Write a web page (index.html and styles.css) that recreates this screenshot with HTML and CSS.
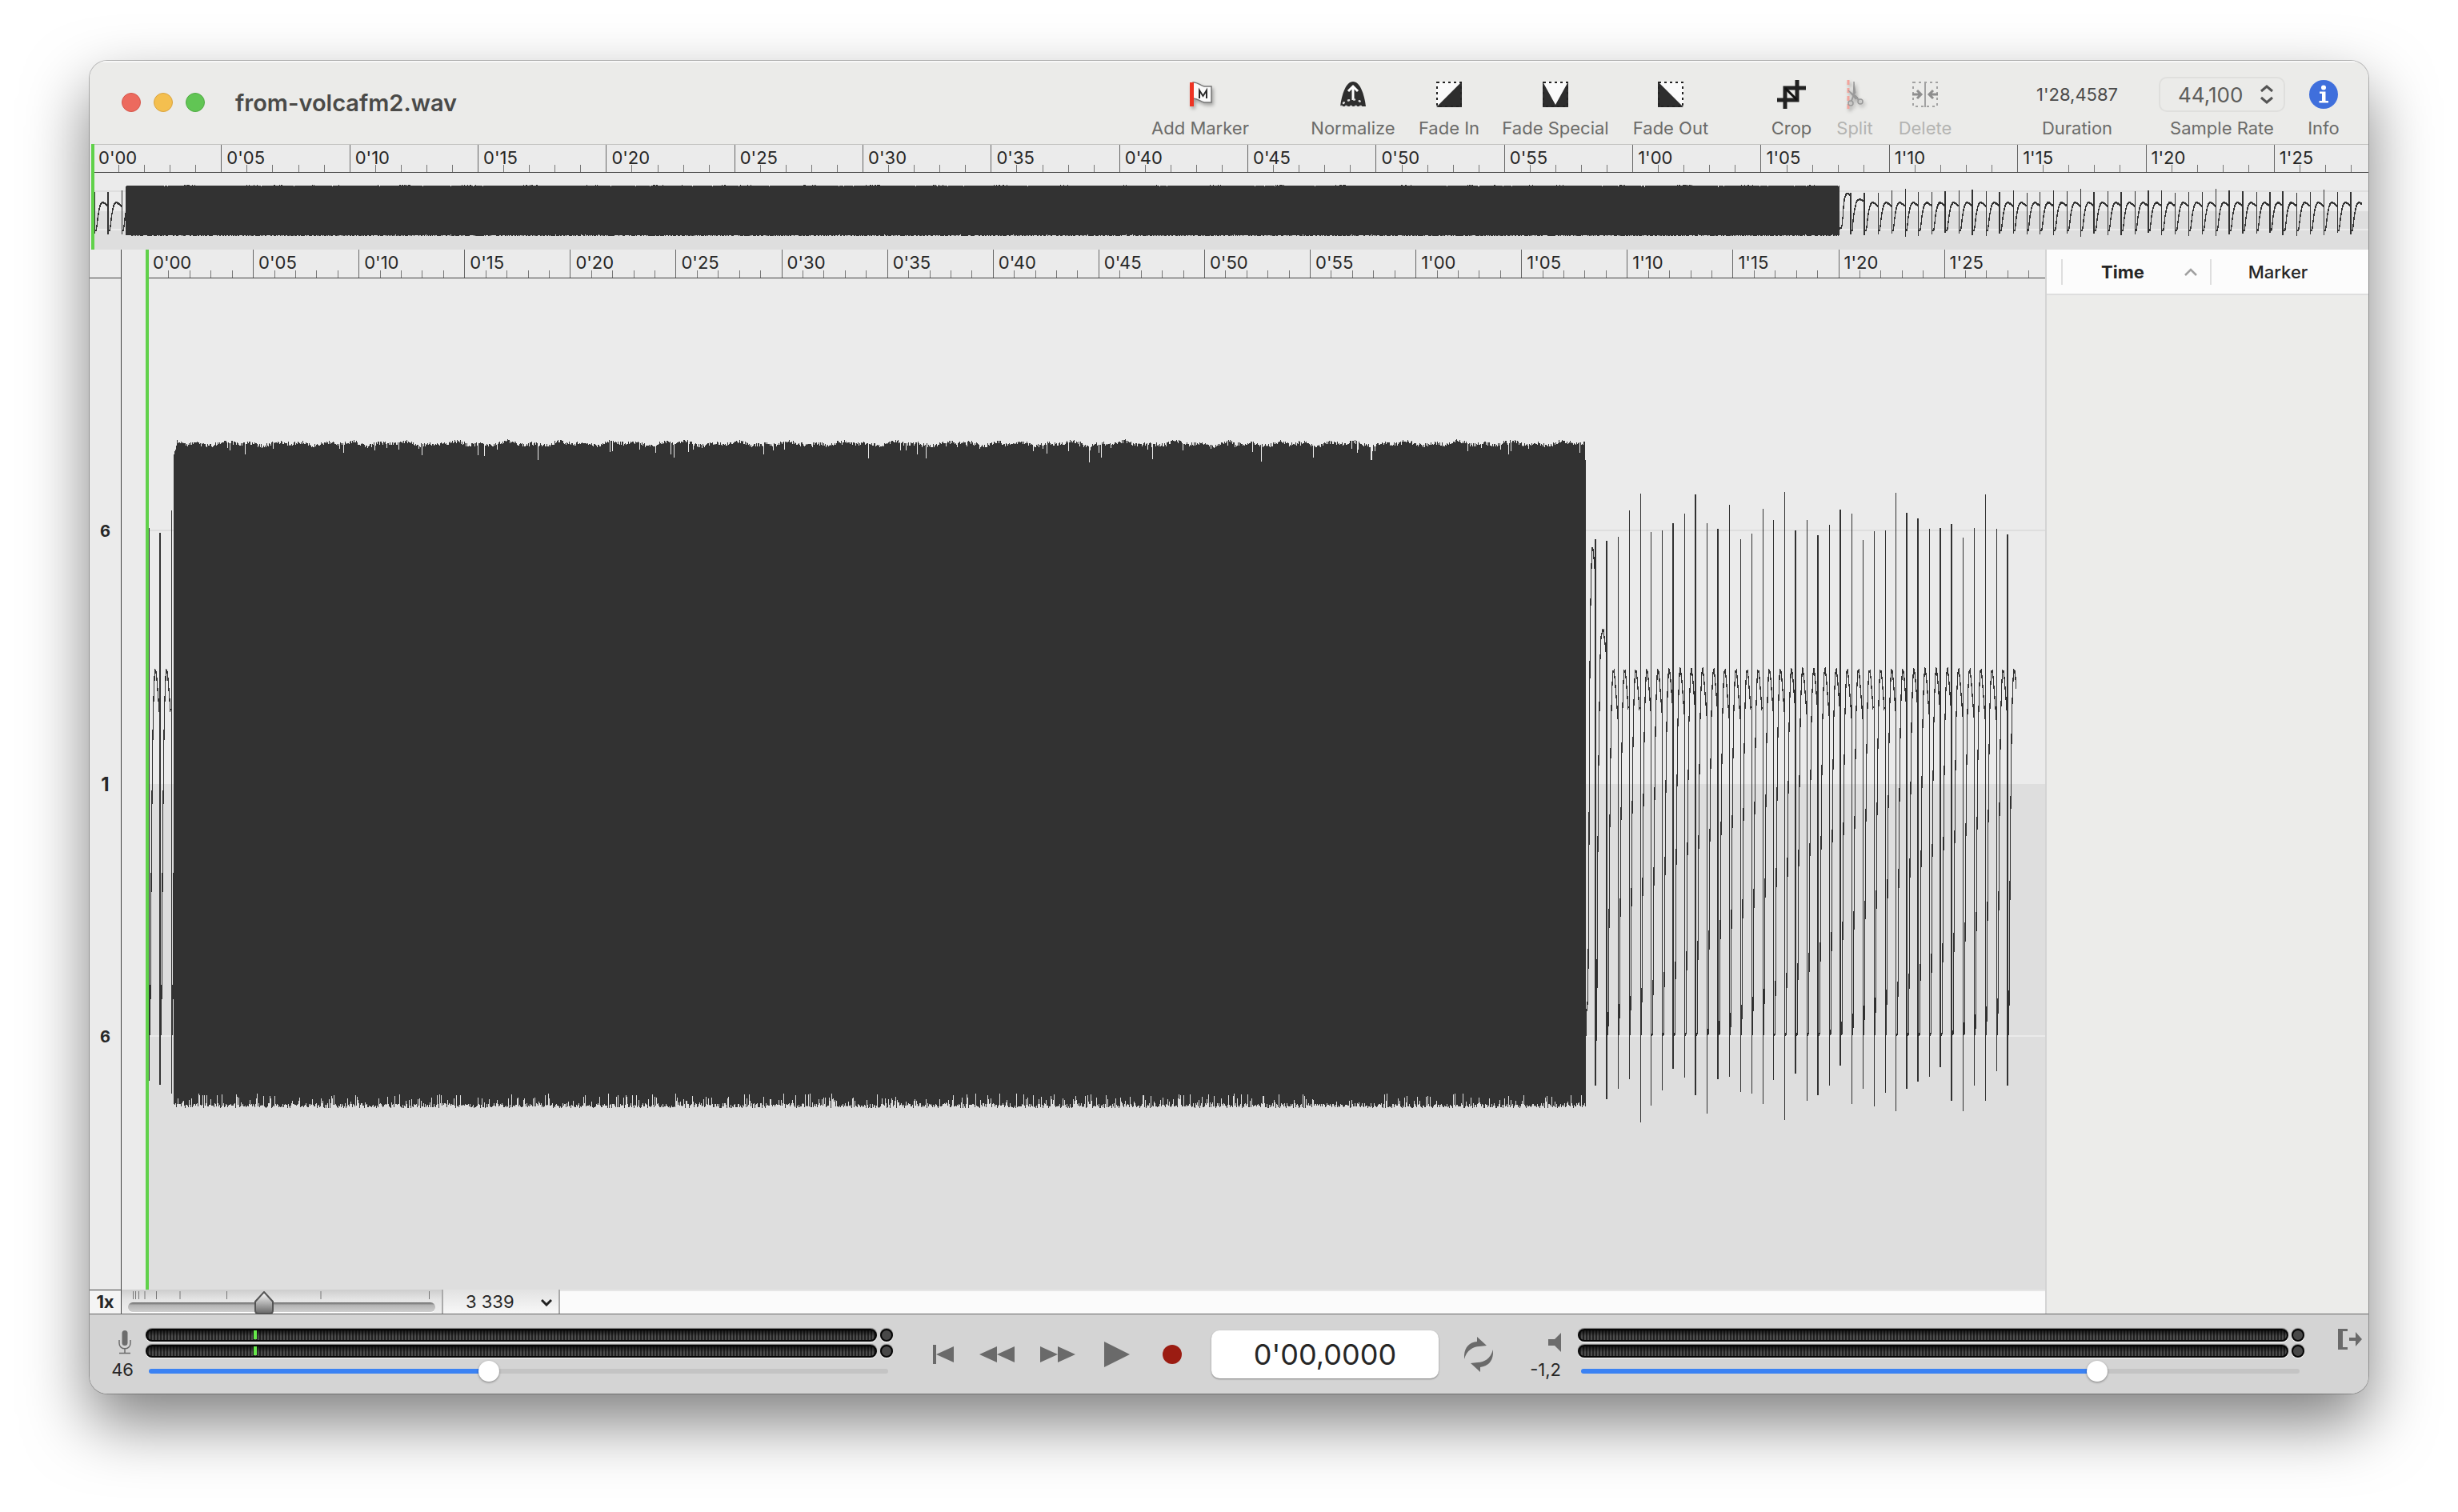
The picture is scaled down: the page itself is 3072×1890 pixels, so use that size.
FILE: index.html
```html
<!DOCTYPE html>
<html lang="en">
  <head>
    <meta charset="UTF-8" />
    <meta name="viewport" content="width=device-width, initial-scale=1.0" />
    <title>from-volcafm2.wav</title>
    <link rel="stylesheet" href="styles.css">
  </head>
  <body>
    <div id="window">
      <header class="titlebar">
        <div class="lights">
          <button class="light red" aria-label="Close"></button>
          <button class="light yellow" aria-label="Minimize"></button>
          <button class="light green" aria-label="Zoom"></button>
        </div>
        <h1>from-volcafm2.wav</h1>
        <div class="toolbar">
          <button class="tool tool-marker">
            <span class="tool-icon">
              <svg class="flag" width="34" height="34" viewBox="0 0 34 34">
                <path d="M8 2c5-1 9 4 14 5h9v20h-9c-5-1-8-5-14-5z" fill="#fafafa" stroke="#777" stroke-width="1.5" />
                <path d="M16 22V12l4.500 7 4.500-7v10" fill="none" stroke="#2a2a2a" stroke-width="2" />
                <rect x="4" y="2" width="5" height="30" fill="#ee3424" />
              </svg>
            </span>
            <span class="tool-label">Add Marker</span>
          </button>
          <div class="tool-group">
            <button class="tool tool-normalize">
              <span class="tool-icon">
                <svg width="34" height="34" viewBox="0 0 34 34">
                  <path d="M1 32C3 17 8 1 17 1s14 16 16 31z" fill="#2e2e2e" />
                  <path d="M17 24V8M11 13l6-6 6 6" fill="none" stroke="#fff" stroke-width="3" />
                  <path d="M5 28c7-6 17-6 24 0" fill="none" stroke="#ddd" stroke-width="2.500" stroke-linecap="round" stroke-dasharray="1 6" />
                  <path d="M2 32h30" stroke="#ddd" stroke-width="2.500" stroke-linecap="round" stroke-dasharray="1 5" />
                </svg>
              </span>
              <span class="tool-label">Normalize</span>
            </button>
            <button class="tool tool-in">
              <span class="tool-icon">
                <svg width="34" height="34" viewBox="0 0 34 34">
                  <rect x="1" y="1" width="32" height="32" fill="#fafafa" />
                  <path d="M1 33L33 1v32z" fill="#2e2e2e" />
                  <rect x="2" y="2" width="30" height="30" fill="none" stroke="#222" stroke-width="2" stroke-dasharray="3 4" />
                </svg>
              </span>
              <span class="tool-label">Fade In</span>
            </button>
            <button class="tool tool-special">
              <span class="tool-icon">
                <svg width="34" height="34" viewBox="0 0 34 34">
                  <rect x="1" y="1" width="32" height="32" fill="#fafafa" />
                  <path d="M1 1l16 29L33 1v32H1z" fill="#2e2e2e" />
                  <rect x="2" y="2" width="30" height="30" fill="none" stroke="#222" stroke-width="2" stroke-dasharray="3 4" />
                </svg>
              </span>
              <span class="tool-label">Fade Special</span>
            </button>
            <button class="tool tool-out">
              <span class="tool-icon">
                <svg width="34" height="34" viewBox="0 0 34 34">
                  <rect x="1" y="1" width="32" height="32" fill="#fafafa" />
                  <path d="M1 1l32 32H1z" fill="#2e2e2e" />
                  <rect x="2" y="2" width="30" height="30" fill="none" stroke="#222" stroke-width="2" stroke-dasharray="3 4" />
                </svg>
              </span>
              <span class="tool-label">Fade Out</span>
            </button>
          </div>
          <div class="tool-group">
            <button class="tool tool-crop">
              <span class="tool-icon">
                <svg width="36" height="36" viewBox="0 0 36 36">
                  <path d="M10 36V10h26M0 25h25V0" fill="none" stroke="#222" stroke-width="5" />
                  <path d="M10 10l15 15" stroke="#111" stroke-width="3" />
                </svg>
              </span>
              <span class="tool-label">Crop</span>
            </button>
            <button class="tool tool-split" disabled>
              <span class="tool-icon">
                <svg class="scissors" width="24" height="36" viewBox="0 0 24 36">
                  <path d="M4 0v36" stroke="#f2a49c" stroke-width="3" stroke-dasharray="6 4" />
                  <path d="M11 2l2 14-3 4zM4 13l12 9-3 2z" fill="#999" stroke="#999" />
                  <path d="M11 18L8 26M12 19l5 6" fill="none" stroke="#999" stroke-width="2" />
                  <circle cx="7" cy="29" r="3" fill="none" stroke="#999" stroke-width="1.500" />
                  <circle cx="19" cy="27" r="3" fill="none" stroke="#999" stroke-width="1.500" />
                </svg>
              </span>
              <span class="tool-label">Split</span>
            </button>
            <button class="tool tool-delete" disabled>
              <span class="tool-icon">
                <svg width="34" height="34" viewBox="0 0 34 34">
                  <rect x="2" y="2" width="30" height="30" fill="none" stroke="#a2a2a2" stroke-width="2" stroke-dasharray="3 4" />
                  <path d="M17 1v32" stroke="#a2a2a2" stroke-width="2" />
                  <path d="M1 17h11M7 12l5 5-5 5M33 17H22M27 12l-5 5 5 5" fill="none" stroke="#8e8e8e" stroke-width="3" />
                </svg>
              </span>
              <span class="tool-label">Delete</span>
            </button>
          </div>
          <div class="tool tool-duration">
            <span class="tool-icon">1'28,4587</span>
            <span class="tool-label">Duration</span>
          </div>
          <div class="tool tool-rate">
            <span class="tool-icon">
              <select id="rate"><option>44,100</option></select>
              <svg class="updown" width="18" height="24" viewBox="0 0 18 24">
                <path d="M2 8l7-6 7 6M2 16l7 6 7-6" fill="none" stroke="#555" stroke-width="3" />
              </svg>
            </span>
            <label class="tool-label" for="rate">Sample Rate</label>
          </div>
          <button class="tool tool-info">
            <span class="tool-icon">
              <svg width="36" height="36" viewBox="0 0 36 36">
                <circle cx="18" cy="18" r="18" fill="#3f6fdc" />
                <circle cx="18" cy="9.500" r="3" fill="#fff" />
                <path d="M13 14.500h7.500V26H24v2.500H12.500V26H16v-9h-3z" fill="#fff" />
              </svg>
            </span>
            <span class="tool-label">Info</span>
          </button>
        </div>
      </header>

      <section class="overview">
        <div class="ruler" data-seconds="88.68"></div>
        <svg class="wave" id="overview-wave" preserveAspectRatio="none"></svg>
        <div class="playhead"></div>
      </section>

      <main class="editor">
        <div class="gutter">
          <div class="gutter-top"></div>
          <div class="scale">
            <span class="upper">6</span>
            <span class="one">1</span>
            <span class="lower">6</span>
          </div>
          <div class="gutter-zoom">1x</div>
        </div>

        <div class="track">
          <div class="track-view">
            <div class="ruler" data-seconds="89.78"></div>
            <svg class="wave" id="track-wave" preserveAspectRatio="none"></svg>
            <div class="playhead"></div>
          </div>
          <div class="track-bar">
            <div class="zoom">
              <svg class="zoom-ticks" width="400" height="12" viewBox="0 0 400 12">
                <path d="M14.500 2v10M17.500 2v10M21.500 2v10M29 2v10M43.500 2v10M73 2v10M131.500 2v10M249 2v10M384.500 2v10" stroke="#777" />
              </svg>
              <input type="range" class="zoom-range" aria-label="Zoom" min="0" max="100" value="44">
            </div>
            <div class="samples">
              <select aria-label="Samples per pixel"><option>3 339</option></select>
              <svg width="14" height="10" viewBox="0 0 14 10">
                <path d="M1 2l6 6 6-6" fill="none" stroke="#222" stroke-width="3" />
              </svg>
            </div>
            <div class="scroll"></div>
          </div>
        </div>

        <aside class="markers">
          <table>
            <thead>
              <tr>
                <th class="col-flag"></th>
                <th class="col-time">Time
                  <svg width="16" height="10" viewBox="0 0 16 10">
                    <path d="M1 9l7-7 7 7" fill="none" stroke="#a0a0a0" stroke-width="2.500" />
                  </svg>
                </th>
                <th class="col-marker">Marker</th>
              </tr>
            </thead>
          </table>
        </aside>
      </main>

      <footer class="transport">
        <div class="level-label in">
          <svg width="16" height="30" viewBox="0 0 16 30">
            <rect x="4.500" y="0" width="7" height="19" rx="3.500" fill="#6c6c6c" />
            <path d="M1 12v4c0 9 14 9 14 0v-4M8 23v5M1 28.500h14" fill="none" stroke="#6c6c6c" stroke-width="1.500" />
          </svg>
          <span>46</span>
        </div>
        <div class="level">
          <div class="meter"><div class="bar"><i class="peak"></i></div><div class="clip"></div></div>
          <div class="meter"><div class="bar"><i class="peak"></i></div><div class="clip"></div></div>
          <input type="range" class="volume volume-in" aria-label="Input level" min="0" max="1000" value="459">
        </div>

        <div class="controls">
          <button class="start" aria-label="Go to start">
            <svg width="26" height="24" viewBox="0 0 26 24"><path d="M0 0h4v24H0zM26 2v20L4 12z" fill="#6a6a6a" /></svg>
          </button>
          <button class="rewind" aria-label="Rewind">
            <svg width="44" height="20" viewBox="0 0 44 20"><path d="M22 0v20L0 10zM44 0v20L22 10z" fill="#6a6a6a" /></svg>
          </button>
          <button class="forward" aria-label="Forward">
            <svg width="44" height="20" viewBox="0 0 44 20"><path d="M0 0v20l22-10zM22 0v20l22-10z" fill="#6a6a6a" /></svg>
          </button>
          <button class="play" aria-label="Play">
            <svg width="32" height="32" viewBox="0 0 32 32"><path d="M0 0v32l32-16z" fill="#6a6a6a" /></svg>
          </button>
          <button class="record" aria-label="Record">
            <svg width="24" height="24" viewBox="0 0 24 24"><circle cx="12" cy="12" r="12" fill="#9b1c12" /></svg>
          </button>
          <input type="text" class="position" aria-label="Position" value="0'00,0000">
          <button class="loop" aria-label="Loop">
            <svg width="36" height="44" viewBox="0 0 36 44">
              <path d="M0 28C-1 15 5 7 16 6V0l12 11-9 1C11 12 3 17 0 28z" fill="#6a6a6a" />
              <path d="M36 16c1 13-5 21-16 22v6L8 33l9-1c8 0 16-5 19-16z" fill="#6a6a6a" />
            </svg>
          </button>
        </div>

        <div class="level-label out">
          <svg width="16" height="24" viewBox="0 0 16 24"><path d="M0 8h8l8-8v24l-8-8H0z" fill="#6c6c6c" /></svg>
          <span>-1,2</span>
        </div>
        <div class="level">
          <div class="meter"><div class="bar"></div><div class="clip"></div></div>
          <div class="meter"><div class="bar"></div><div class="clip"></div></div>
          <input type="range" class="volume volume-out" aria-label="Output level" min="0" max="1000" value="725">
        </div>
        <button class="drawer" aria-label="Toggle drawer">
          <svg width="30" height="26" viewBox="0 0 30 26"><path d="M0 0h12v3H6v20h6v3H0zM14 11h8V4l8 9-8 9v-7h-8z" fill="#6a6a6a" /></svg>
        </button>
      </footer>
    </div>
    <script src="wave.js"></script>
  </body>
</html>
```
FILE: styles.css
```css
* {
  margin: 0;
  padding: 0;
  box-sizing: border-box;
}
body {
  min-height: 100vh;
  display: flex;
  padding: 76px 112px 148px;
  background-color: #fff;
  color: #262626;
  font-family: Inter, "Liberation Sans", sans-serif;
  font-size: 22px;
}
button,
select,
input {
  font: inherit;
  color: inherit;
  border: none;
  background: none;
  appearance: none;
}
svg {
  display: block;
  flex: none;
}
#window {
  flex: 1;
  min-width: 0;
  display: flex;
  flex-direction: column;
  border-radius: 22px;
  overflow: hidden;
  background-color: #ebebeb;
  box-shadow: 0 0 0 1px rgba(0, 0, 0, 0.25), 0 36px 80px rgba(0, 0, 0, 0.5);
}

/* title bar */
.titlebar {
  height: 104px;
  display: flex;
  align-items: center;
  padding: 0 36px 0 40px;
  background-color: #ebebe9;
  box-shadow: inset 0 2px 0 #f8f8f8;
}
.lights {
  display: flex;
  gap: 16px;
}
.light {
  width: 24px;
  height: 24px;
  border-radius: 50%;
}
.red {
  background-color: #ec6a5e;
  border: 1px solid #d5574c;
}
.yellow {
  background-color: #f4bf4f;
  border: 1px solid #d9a440;
}
.green {
  background-color: #61c554;
  border: 1px solid #50aa44;
}
h1 {
  margin-left: 38px;
  font-size: 29px;
  font-weight: 600;
  color: #4a4a48;
}
.toolbar {
  margin-left: auto;
  padding-top: 14px;
  display: flex;
}
.tool-group {
  display: flex;
  gap: 30px;
  margin-left: 78px;
}
.tool {
  min-width: 0;
  display: flex;
  flex-direction: column;
  align-items: center;
  gap: 6px;
  white-space: nowrap;
}
.tool-icon {
  position: relative;
  height: 44px;
  display: flex;
  align-items: center;
  color: #4a4a4a;
}
.tool-label {
  line-height: 28px;
  color: #6c6c6a;
}
.tool:disabled .tool-label {
  color: #b4b4b2;
}
.tool-marker {
  width: 120px;
}
.tool-normalize {
  width: 106px;
}
.tool-in {
  width: 74px;
}
.tool-special {
  width: 132px;
}
.tool-out {
  width: 96px;
}
.tool-crop {
  width: 50px;
}
.tool-split {
  width: 48px;
}
.tool-delete {
  width: 68px;
}
.tool-duration {
  width: 104px;
  margin-left: 104px;
}
.tool-rate {
  width: 158px;
  margin-left: 50px;
}
.tool-info {
  width: 40px;
  margin-left: 28px;
}
.flag,
.scissors {
  filter: drop-shadow(2px 3px 2px rgba(0, 0, 0, 0.3));
}
#rate {
  width: 158px;
  height: 44px;
  padding-left: 22px;
  border: 2px solid #dfdfdd;
  border-radius: 10px;
  font-size: 26px;
  color: #5c5c5a;
}
.updown {
  position: absolute;
  right: 14px;
  top: 10px;
  pointer-events: none;
}

/* time rulers */
.ruler {
  height: 36px;
  display: flex;
  overflow: hidden;
  border-bottom: 1px solid #444;
  background-color: #ebebeb;
}
.cell {
  position: relative;
  display: flex;
  align-items: flex-end;
  min-width: 0;
  border-left: 1px solid #666;
}
.cell:first-child {
  border-left-color: transparent;
}
.cell span {
  position: absolute;
  left: 6px;
  top: 2px;
  line-height: 28px;
}
.cell i {
  height: 9px;
  min-width: 0;
}
.cell i + i {
  border-left: 1px solid #777;
}

/* waveforms */
.wave {
  width: 100%;
  background: linear-gradient(#ebebeb 50%, #dedede 50%);
}
.playhead {
  position: absolute;
  top: 0;
  bottom: 0;
  width: 4px;
  background-color: #60d14a;
}
.overview {
  position: relative;
  padding-left: 4px;
}
.overview .ruler {
  border-top: 1px solid #c2c2c0;
}
.overview .wave {
  height: 96px;
}
.overview .playhead {
  left: 2px;
}

/* editor */
.editor {
  flex: 1;
  display: grid;
  grid-template-columns: 40px 1fr 404px;
}
.gutter {
  display: flex;
  flex-direction: column;
  border-right: 1px solid #444;
  font-weight: 700;
}
.gutter-top {
  height: 36px;
  border-bottom: 1px solid #444;
}
.scale {
  flex: 1;
  display: grid;
  grid-template-rows: 1fr 2fr 2fr 2fr 1fr;
  align-items: center;
  justify-items: center;
  font-size: 20px;
}
.scale .upper {
  grid-row: 2;
}
.scale .one {
  grid-row: 3;
  font-size: 24px;
}
.scale .lower {
  grid-row: 4;
}
.gutter-zoom {
  height: 30px;
  line-height: 29px;
  text-align: center;
  border-top: 1px solid #444;
  background-color: #f4f4f4;
  font-size: 22px;
}
.track {
  min-width: 0;
  display: flex;
  flex-direction: column;
}
.track-view {
  flex: 1;
  position: relative;
  display: flex;
  flex-direction: column;
  padding-left: 32px;
}
.track-view .wave {
  flex: 1;
  min-height: 0;
}
.track-view .playhead {
  left: 30px;
}
.track-bar {
  height: 30px;
  display: flex;
}
.zoom {
  width: 402px;
  padding: 0 8px;
  position: relative;
  border-right: 2px solid #aaa;
  background: linear-gradient(#cdcdcd, #e4e4e4 40%, #efefef);
}
.zoom-ticks {
  position: absolute;
  left: 0;
  top: 0;
}
.zoom-range {
  position: relative;
  display: block;
  width: 384px;
  height: 30px;
}
.zoom-range::-webkit-slider-runnable-track {
  height: 12px;
  margin-top: 14px;
  border-radius: 6px;
  background: linear-gradient(#666, #b4b4b4 30%, #cfcfcf);
  box-shadow: 0 1px 0 #fff;
}
.zoom-range::-webkit-slider-thumb {
  appearance: none;
  width: 24px;
  height: 29px;
  margin-top: -14px;
  background: url("data:image/svg+xml,%3Csvg xmlns='http://www.w3.org/2000/svg' viewBox='0 0 24 29'%3E%3ClinearGradient id='g' x2='0' y2='1'%3E%3Cstop stop-color='%23fff'/%3E%3Cstop offset='1' stop-color='%23666'/%3E%3C/linearGradient%3E%3Cpath d='M12 1L23 13v11q0 4-4 4H5q-4 0-4-4V13z' fill='url(%23g)' stroke='%23555' stroke-width='2'/%3E%3C/svg%3E");
}
.samples {
  position: relative;
  width: 146px;
  border-right: 2px solid #aaa;
  background: linear-gradient(#e2e2e2, #f8f8f8);
}
.samples select {
  width: 100%;
  height: 30px;
  padding-left: 28px;
}
.samples svg {
  position: absolute;
  right: 8px;
  top: 11px;
  pointer-events: none;
}
.scroll {
  flex: 1;
  border-top: 2px solid #e6e6e6;
  background-color: #fbfbfb;
}

/* marker list */
.markers {
  border-left: 2px solid #d4d4d4;
  background-color: #ececea;
}
table {
  width: 100%;
  border-collapse: collapse;
  table-layout: fixed;
}
thead {
  background-color: #fcfcfc;
}
th {
  position: relative;
  height: 56px;
  border-bottom: 2px solid #dedede;
  font-weight: 500;
}
th + th::before {
  content: "";
  position: absolute;
  left: 0;
  top: 12px;
  width: 2px;
  height: 32px;
  background-color: #dedede;
}
.col-flag {
  width: 18px;
}
.col-time {
  width: 186px;
  padding-right: 32px;
  font-weight: 700;
}
.col-time svg {
  position: absolute;
  right: 16px;
  top: 23px;
}
.col-marker {
  padding-right: 28px;
}

/* transport */
.transport {
  height: 100px;
  display: grid;
  grid-template-columns: 70px 934fr 786px 70px 908fr 80px;
  border-top: 1px solid #666;
  background-color: #d4d4d4;
}
.level-label {
  display: flex;
  flex-direction: column;
  align-items: flex-end;
  padding-top: 20px;
}
.level-label svg {
  height: 30px;
}
.level-label span {
  line-height: 28px;
  margin-top: 5px;
}
.in {
  padding-right: 15px;
}
.in svg {
  margin-right: 3px;
}
.out {
  padding-right: 21px;
}
.out svg {
  height: 24px;
  margin: 3px 0;
}
.level {
  min-width: 0;
  padding-top: 18px;
}
.meter {
  display: flex;
  gap: 4px;
  height: 16px;
  margin-bottom: 4px;
}
.bar,
.clip {
  position: relative;
  border-radius: 8px;
  border: 2px solid #050505;
  box-shadow: 0 -1px 1px #777, 0 1px 1px #fff;
}
.bar {
  flex: 1;
  background:
    linear-gradient(rgba(0, 0, 0, 0.7), rgba(0, 0, 0, 0) 60%),
    repeating-linear-gradient(90deg, #222 0 2px, #4c4c4c 2px 4px);
}
.clip {
  width: 16px;
  background-color: #484848;
}
.peak {
  position: absolute;
  left: calc(14% + 6px);
  top: 0;
  width: 4px;
  height: 11px;
  background-color: #66e84a;
}
.volume {
  display: block;
  width: calc(100% - 10px);
  height: 26px;
  margin-left: 4px;
}
.volume::-webkit-slider-runnable-track {
  height: 6px;
  border-radius: 3px;
}
.volume-in::-webkit-slider-runnable-track {
  background: linear-gradient(90deg, #3b82f3 46%, #c4c4c4 46%);
}
.volume-out::-webkit-slider-runnable-track {
  background: linear-gradient(90deg, #3b82f3 72%, #c4c4c4 72%);
}
.volume::-webkit-slider-thumb {
  appearance: none;
  width: 26px;
  height: 26px;
  margin-top: -10px;
  border-radius: 50%;
  background-color: #fff;
  box-shadow: 0 1px 3px rgba(0, 0, 0, 0.4);
}
.controls {
  display: flex;
  align-items: center;
  gap: 32px;
  padding-left: 50px;
}
.controls button {
  display: flex;
  justify-content: center;
}
.play {
  width: 40px;
}
.record {
  width: 34px;
}
.position {
  width: 284px;
  height: 60px;
  border-radius: 10px;
  background-color: #fff;
  box-shadow: 0 1px 2px rgba(0, 0, 0, 0.4);
  text-align: center;
  font-size: 36px;
}
.drawer {
  justify-self: end;
  align-self: start;
  margin: 18px 8px 0 0;
}
```
FILE: wave.js
```js
const LENGTH = 2372; // model units across the track view
const BLOCK_START = 33;
const BLOCK_END = 1798;
const END = 2336;

// one slow pulse: [offset from the spike, level]
const pulse = [[0, -314], [1.6, -312], [2.3, -235], [3.3, -90], [4.3, 5], [5.3, 78], [6.3, 115], [7.3, 137], [8.4, 145], [10, 132], [11.7, 110], [14, 80]];
const release = [[0, -314], [0.5, -287], [2.3, -272], [3, -230], [4, -75], [4.6, 80], [5.5, 200], [6.7, 258], [7.6, 293], [8.5, 297], [9.7, 287], [12, 260]];
const settle = [[0, -320], [1.3, -320], [2.1, -143], [3.4, 11], [4.6, 92], [5.5, 155], [6.7, 184], [9.3, 195], [11.4, 178], [14, 155]];

const ups = [306, 304, 309, 342, 363, 315, 317, 326, 338, 362, 326, 319, 349, 306, 313, 344, 330, 365, 317, 330, 311, 324, 343, 338, 305, 316, 317, 364, 339, 332, 319, 320, 325, 308, 320, 362, 319, 312];
const downs = [377, 394, 381, 369, 423, 402, 383, 356, 367, 389, 412, 369, 366, 385, 387, 400, 370, 420, 362, 396, 389, 377, 352, 400, 381, 403, 386, 409, 381, 372, 366, 354, 396, 409, 377, 396, 359, 377];
const wide = [0, 1, 7, 9, 11, 18, 20, 22, 28, 29, 31, 32, 37];

const spikes = [[2, 320, 371, 1], [16, 314, 376, 2], [30, 342, 387, 1]];
for (let i = 0; i < ups.length; i++) {
  spikes.push([1810.4 + i * 13.91, ups[i], downs[i], wide.includes(i) ? 2 : 1]);
}

let seed = 7;
function random() {
  seed = (seed * 16807) % 2147483647;
  return seed / 2147483647;
}

function sample(shape, t) {
  for (let i = 1; i < shape.length; i++) {
    if (t <= shape[i][0]) {
      const [x0, y0] = shape[i - 1];
      const [x1, y1] = shape[i];
      return y0 + ((y1 - y0) * (t - x0)) / (x1 - x0);
    }
  }
  return shape[shape.length - 1][1];
}

function level(x) {
  if (x >= BLOCK_END && x < spikes[3][0]) return sample(release, x - BLOCK_END);
  let last = 0;
  for (let i = 0; i < spikes.length; i++) {
    if (spikes[i][0] <= x) last = i;
  }
  return sample(last === 3 ? settle : pulse, Math.max(0, x - spikes[last][0]));
}

function drawWave(id, gridWidth) {
  const svg = document.getElementById(id);
  const box = svg.getBoundingClientRect();
  const width = Math.round(box.width);
  const height = Math.round(box.height);
  const mid = height / 2;
  const sx = gridWidth / LENGTH * width / LENGTH;
  const sy = height / 1264;
  let bars = "";
  const bar = (px, top, bottom) => {
    bars += `M${px} ${(mid - top * sy).toFixed(1)}V${(mid + bottom * sy).toFixed(1)}`;
  };
  for (let px = 2; px < END * sx; px++) {
    const x = px / sx;
    if (x >= BLOCK_START && x < BLOCK_END) {
      const rise = Math.max(0, 18 - (x - BLOCK_START) * 5);
      const swell = 3 + 3 * Math.sin(x / 7) * Math.sin(x / 19);
      const dip = random() < 0.1 ? random() * random() * 28 : random() * 5;
      const low = random() < 0.3 ? random() * 18 : random() * 6;
      bar(px + 0.5, 431 - rise - swell - dip, 405 - low);
    } else {
      const a = level(x);
      const b = level(Math.min(x + 1.15 / sx, END));
      // a drop means the next spike has been crossed
      const to = a > 0 && b < -100 ? a : b;
      const pad = 1 / sy;
      bar(px + 0.5, Math.max(a, to) + pad, pad - Math.min(a, to));
    }
  }
  for (const [x, up, down, w] of spikes) {
    for (let k = 0; k < w; k++) {
      bar(Math.floor(x * sx) + 0.5 - k, up, down);
    }
  }
  svg.setAttribute("viewBox", `0 0 ${width} ${height}`);
  svg.innerHTML = `
    <rect x="0" y="${height / 4 - 2}" width="${width}" height="2" fill="#dedede" />
    <rect x="0" y="${height * 3 / 4 - 2}" width="${width}" height="2" fill="#ebebeb" />
    <path d="${bars}" stroke="#323232" fill="none" shape-rendering="crispEdges" />`;
}

document.querySelectorAll(".ruler").forEach((ruler) => {
  const total = Number(ruler.dataset.seconds);
  for (let s = 0; s < total; s += 5) {
    const seconds = Math.min(5, total - s);
    const cell = document.createElement("div");
    cell.className = "cell";
    cell.style.flex = `${seconds} 0 0`;
    const label = document.createElement("span");
    label.textContent = `${Math.floor(s / 60)}'${String(s % 60).padStart(2, "0")}`;
    cell.append(label);
    for (let k = 0; k < seconds; k++) {
      const tick = document.createElement("i");
      tick.style.flex = `${Math.min(1, seconds - k)} 0 0`;
      cell.append(tick);
    }
    ruler.append(cell);
  }
});

// both views show the same file, at their own seconds per pixel
drawWave("overview-wave", LENGTH * 89.78 / 88.68);
drawWave("track-wave", LENGTH);
```
